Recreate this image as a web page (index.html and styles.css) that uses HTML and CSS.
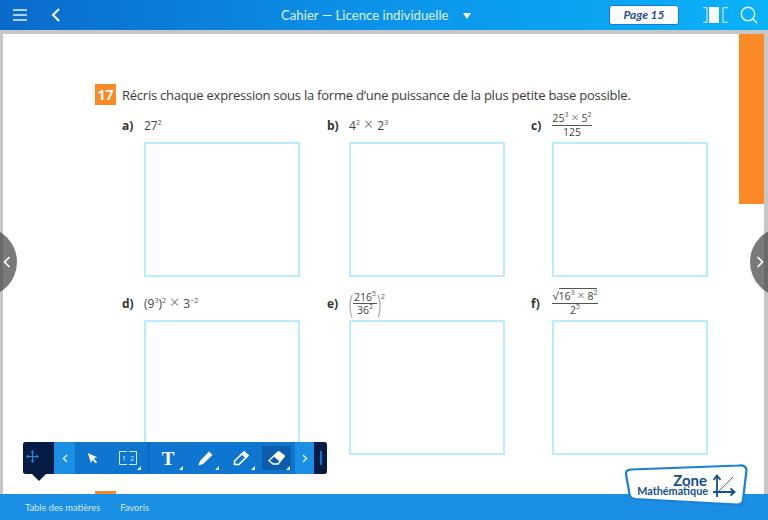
FILE: index.html
```html
<!DOCTYPE html>
<html>
<head>
    <title>Cahier - Licence individuelle</title>
    <link rel="stylesheet" href="styles.css">
</head>
<body>
    <header class="topbar">
        <div class="topbar-left">
            <svg class="icon-menu" width="14" height="12" viewBox="0 0 14 12"><path d="M0 1h14M0 6h14M0 11h14" stroke="#e6f4ff" stroke-width="1.4"/></svg>
            <svg class="icon-back" width="9" height="14" viewBox="0 0 9 14"><path d="M8 1 2 7l6 6" fill="none" stroke="#fff" stroke-width="2"/></svg>
        </div>
        <div class="doc-title">Cahier — Licence individuelle<span class="caret"></span></div>
        <div class="topbar-right">
            <div class="page-btn">Page 15</div>
            <svg class="icon-spread" width="27" height="16" viewBox="0 0 27 16"><path d="M1 .7h4v14.6H1" fill="none" stroke="#d5efff" stroke-width="1.1"/><rect x="7" y="0" width="10" height="16" fill="#fff"/><path d="M26 .7h-5v14.6h5" fill="none" stroke="#d5efff" stroke-width="1.1"/></svg>
            <svg class="icon-search" width="18" height="18" viewBox="0 0 18 18"><circle cx="8" cy="8" r="6.7" fill="none" stroke="#eaf7ff" stroke-width="1.5"/><path d="m12.8 12.8 4.4 4.4" stroke="#eaf7ff" stroke-width="1.5"/></svg>
        </div>
    </header>

    <main class="viewer">
        <div class="page">
            <div class="exercise-title">
                <span class="num">17</span>
                <span>Récris chaque expression sous la forme d’une puissance de la plus petite base possible.</span>
            </div>

            <div class="answers">
                <div class="answer">
                    <div class="head"><b>a)</b><span class="expr">27<sup>2</sup></span></div>
                    <div class="box"></div>
                </div>
                <div class="answer">
                    <div class="head"><b>b)</b><span class="expr">4<sup>2</sup> <i class="times">×</i> 2<sup>3</sup></span></div>
                    <div class="box"></div>
                </div>
                <div class="answer col-c">
                    <div class="head"><b>c)</b>
                        <span class="frac"><span class="top">25<sup>3</sup> <i class="times">×</i> 5<sup>2</sup></span><span>125</span></span>
                    </div>
                    <div class="box"></div>
                </div>
                <div class="answer">
                    <div class="head"><b>d)</b><span class="expr">(9<sup>3</sup>)<sup>2</sup> <i class="times">×</i> 3<sup>−2</sup></span></div>
                    <div class="box"></div>
                </div>
                <div class="answer">
                    <div class="head"><b>e)</b>
                        <span class="expr paren-wrap"><span class="paren">(</span><span class="frac tight"><span class="top">216<sup>5</sup></span><span>36<sup>2</sup></span></span><span class="paren">)</span><sup class="outer">2</sup></span>
                    </div>
                    <div class="box"></div>
                </div>
                <div class="answer col-c">
                    <div class="head"><b>f)</b>
                        <span class="frac"><span class="top"><span class="root">√</span><span class="radicand">16<sup>3</sup> <i class="times">×</i> 8<sup>2</sup></span></span><span>2<sup>5</sup></span></span>
                    </div>
                    <div class="box"></div>
                </div>
            </div>

            <div class="next-num"></div>
        </div>

        <div class="side-tab"></div>

        <div class="nav nav-left"><svg width="8" height="12" viewBox="0 0 8 12"><path d="M6.5 1 1.500 6l5 5" fill="none" stroke="#fff" stroke-width="1.6"/></svg></div>
        <div class="nav nav-right"><svg width="8" height="12" viewBox="0 0 8 12"><path d="m1.500 1 5 5-5 5" fill="none" stroke="#fff" stroke-width="1.6"/></svg></div>

        <div class="toolbar">
            <div class="tb-grip">
                <svg width="13" height="13" viewBox="0 0 13 13"><path d="M6.5 0 4.600 2.400h1.300v3.500H2.400V4.600L0 6.500l2.400 1.900V7.100h3.500v3.500H4.600L6.500 13l1.900-2.400H7.100V7.100h3.500v1.300L13 6.500l-2.400-1.900v1.300H7.100V2.400h1.300z" fill="#1a8fe3"/></svg>
            </div>
            <div class="tb-step prev"><svg width="6" height="9" viewBox="0 0 6 9"><path d="M5 1 1.500 4.500 5 8" fill="none" stroke="#e3f2ff" stroke-width="1.4"/></svg></div>
            <div class="tb-tools">
                <div class="tool pointer-tool"><svg width="11" height="11" viewBox="0 0 13 13"><path d="M1 0 12 5 8 6.500 12 11l-1.600 1.500L6.300 8 4.800 12z" fill="#fff"/></svg></div>
                <div class="tool corner sep"><svg width="18" height="14" viewBox="0 0 18 14"><path d="M8 .5H.5v13H8M10 .5h7.500v13H10" fill="none" stroke="#d8ecff"/><text x="3" y="10" class="tool-num">1</text><text x="11" y="10" class="tool-num">2</text></svg></div>
                <div class="tool corner text-tool"><span class="tool-t">T</span></div>
                <div class="tool corner"><svg width="15" height="15" viewBox="0 0 15 15"><path d="M11 .5 14.500 4 5 13 .5 14.500 2 10z" fill="#fff"/></svg></div>
                <div class="tool corner"><svg width="16" height="15" viewBox="0 0 16 15"><path d="M11 1 15 4.500 6 13.500H1.500V10z" fill="none" stroke="#fff" stroke-width="1.7"/><path d="M8.500 3.500 12.500 7 15 4.500 11 1z" fill="#fff"/></svg></div>
                <div class="tool corner active"><svg width="17" height="14" viewBox="0 0 17 14"><path d="M10.500.5 16.500 5 10 13H5L1 9.500z" fill="none" stroke="#fff" stroke-width="1.4"/><path d="M10.500.5 16.500 5 11.500 10.500 6 5.500z" fill="#fff"/></svg></div>
            </div>
            <div class="tb-step next"><svg width="6" height="9" viewBox="0 0 6 9"><path d="m1 1 3.500 3.500L1 8" fill="none" stroke="#e3f2ff" stroke-width="1.4"/></svg></div>
            <div class="tb-end"><span></span></div>
        </div>
        <div class="tb-pointer"></div>
    </main>

    <footer class="bottombar">
        <a>Table des matières</a>
        <a>Favoris</a>
    </footer>

    <svg class="zone-logo" width="124" height="43" viewBox="0 0 124 43">
        <path d="M7 5.500 115 1.500Q122 1 122.500 6L119 36Q118.500 41 113 40.500L11 35Q6 34.500 5.500 30L2 10Q1.500 6 7 5.500z" fill="#fff" stroke="#1a7fd6" stroke-width="2.2"/>
        <text x="83" y="22" text-anchor="end" class="logo-big">Zone</text>
        <text x="84" y="31" text-anchor="end" class="logo-small">Mathématique</text>
        <path d="M93 33V12M89.500 16l3.500-4.500 3.500 4.500M89 28h21M106.500 24.500l4 3.500-4 3.500" fill="none" stroke="#13508f" stroke-width="1.8"/>
        <path d="M95 27 109 13" stroke="#13508f" stroke-width=".8"/>
    </svg>
</body>
</html>
```

FILE: styles.css
```css
html, body { margin: 0; height: 520px; overflow: hidden; }
body { display: flex; flex-direction: column; position: relative; font-family: "Open Sans", sans-serif; background: #c6c6c6; }

/* top bar */
.topbar { height: 30px; display: flex; align-items: center; position: relative; color: #dff2ff; background: linear-gradient(90deg, #0a6bcb 0%, #0c94ea 50%, #0ab2f8 100%); }
.topbar-left { display: flex; align-items: center; gap: 24px; padding-left: 13px; }
.doc-title { position: absolute; left: 281px; top: 6px; font: 13.2px/18px Lato, sans-serif; white-space: nowrap; }
.caret { display: inline-block; margin-left: 15px; vertical-align: 1px; border: 4px solid transparent; border-top: 6px solid #fff; border-bottom: 0; }
.topbar-right { margin-left: auto; display: flex; align-items: center; padding-right: 10px; }
.page-btn { width: 68px; height: 18px; background: #fff; border: 1px solid #1679d3; border-radius: 3px; text-align: center; color: #24508f; font: italic 700 12px/18px Lato, sans-serif; }
.icon-spread { margin-left: 23px; }
.icon-search { margin-left: 11px; }

/* viewer */
.viewer { flex: 1; position: relative; padding: 4px 4px 0 3px; min-height: 0; overflow: hidden; }
.page { height: 100%; background: #fff; padding: 50px 0 0 92px; box-sizing: border-box; overflow: hidden; color: #3a3a3a; }
.exercise-title { display: flex; align-items: center; gap: 6px; height: 21px; font-size: 13px; letter-spacing: -.23px; white-space: nowrap; }
.num { width: 21px; height: 21px; background: #fb8a26; color: #fff; font: 700 14px/21px "Open Sans", sans-serif; text-align: center; letter-spacing: 0; }

.answers { display: grid; grid-template-columns: 205px 204px 176px; row-gap: 15px; margin: 9px 0 0 27px; }
.answer { display: flex; flex-direction: column; }
.head { height: 22px; margin-bottom: 6px; display: flex; align-items: center; font-size: 12px; }
.head b { width: 22px; font-weight: 700; flex: none; color: #333; }
.expr { color: #444; }
.box { width: 152px; height: 131px; margin-left: 22px; border: 2px solid #b7edfc; }
.col-c .box { margin-left: 20.5px; }
.col-c .head b { width: 20.5px; }
.times { font-style: normal; font-size: 13px; font-weight: 300; color: #555; line-height: 1; }
.expr .times { font-size: 16px; margin: 0 1px; }
sup { font-size: 7px; line-height: 0; vertical-align: 5px; color: #555; }

.frac { display: inline-flex; flex-direction: column; align-items: center; font-size: 10.5px; line-height: 13px; color: #444; }
.frac .top { border-bottom: 1px solid #555; padding: 0 1px; white-space: nowrap; }
.frac.tight { line-height: 12px; }
.paren-wrap { display: inline-flex; align-items: center; }
.paren { font-size: 26px; font-weight: 300; line-height: 1; color: #777; transform: scaleX(.55); width: 4px; display: flex; justify-content: center; }
.outer { align-self: flex-start; margin-top: 7px; vertical-align: 0; }
.root { font-size: 11px; }
.radicand { border-top: 1px solid #555; }

.next-num { width: 21px; height: 21px; background: #fb8a26; margin-top: 36px; }

.side-tab { position: absolute; top: 4px; right: 4px; width: 25px; height: 170px; background: #fb8a26; }

/* page arrows */
.nav { position: absolute; top: 197px; width: 70px; height: 70px; border-radius: 50%; background: rgba(70, 70, 70, .72); display: flex; align-items: center; }
.nav-left { left: -53px; justify-content: flex-end; }
.nav-left svg { margin-right: 6px; }
.nav-right { right: -52px; justify-content: flex-start; }
.nav-right svg { margin-left: 6px; }

/* annotation toolbar */
.toolbar { position: absolute; left: 23px; top: 412px; width: 304px; height: 32px; display: flex; border-radius: 3px; overflow: hidden; background: #0e76d0; }
.tb-grip { flex: none; width: 31px; background: #071c45; padding: 4px 0 0 3px; box-sizing: border-box; }
.tb-step { flex: none; background: #1a8fe3; display: flex; align-items: center; justify-content: center; }
.tb-step.prev { width: 21px; }
.tb-step.next { width: 19px; }
.tb-tools { flex: none; width: 220px; display: flex; align-items: center; }
.tool { flex: none; position: relative; width: 36px; height: 32px; display: flex; align-items: center; justify-content: center; box-sizing: border-box; }
.tool.pointer-tool { width: 35px; }
.tool.sep { width: 39px; padding-right: 3px; border-right: 1px solid #0b62b2; }
.tool.text-tool { width: 38px; }
.tool.active { width: 29px; height: 24px; margin-left: 3px; background: #0c5dab; }
.tool.corner::after { content: ""; position: absolute; right: 4px; bottom: 4px; border: 2.5px solid transparent; border-right-color: #fff; border-bottom-color: #fff; }
.tool.sep::after { right: 7px; }
.tool.active::after { right: 1px; bottom: 0; }
.tool-t { color: #fff; font: 700 19px/1 "Liberation Serif", serif; }
.tool-num { font: 7px "Open Sans", sans-serif; fill: #d8ecff; }
.tb-end { flex: none; width: 13px; background: #071c45; display: flex; align-items: center; justify-content: center; }
.tb-end span { width: 2px; height: 14px; background: #0e76d0; }
.tb-pointer { position: absolute; left: 32px; top: 444px; border: 7px solid transparent; border-top: 7px solid #071c45; border-bottom: 0; }

/* footer */
.bottombar { height: 26px; background: #1a8fe3; display: flex; align-items: center; gap: 20px; padding-left: 25px; font: 9.3px Lato, sans-serif; color: #d6eafb; }

.zone-logo { position: absolute; left: 624px; top: 464px; }
.logo-big { font: 700 15px Lato, sans-serif; fill: #13508f; }
.logo-small { font: 700 10.8px Lato, sans-serif; fill: #13508f; }
```
